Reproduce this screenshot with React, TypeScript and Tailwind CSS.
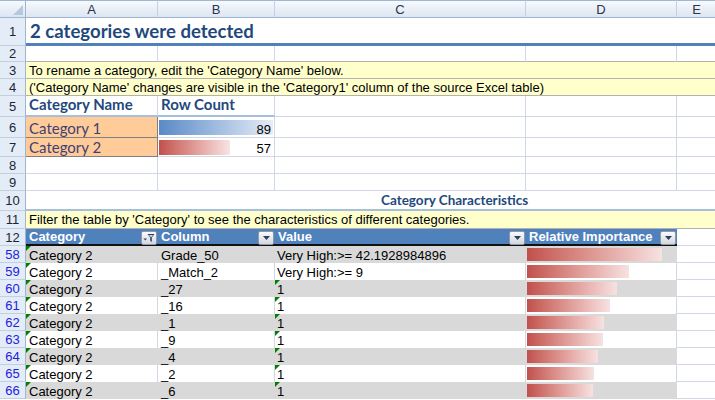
import React from "react"

const letters = [
    { l: "A", w: "w-[132px]" },
    { l: "B", w: "w-[117px]" },
    { l: "C", w: "w-[251px]" },
    { l: "D", w: "w-[151px]" },
    { l: "E", w: "w-[40px]" },
    { l: "", w: "w-[80px]" },
]

const data = [
    { n: 58, col: "Grade_50", val: "Very High:>= 42.1928984896", w: 135, tick: false },
    { n: 59, col: "_Match_2", val: "Very High:>= 9", w: 102, tick: false },
    { n: 60, col: "_27", val: "1", w: 90, tick: true },
    { n: 61, col: "_16", val: "1", w: 83, tick: true },
    { n: 62, col: "_1", val: "1", w: 77, tick: true },
    { n: 63, col: "_9", val: "1", w: 76, tick: true },
    { n: 64, col: "_4", val: "1", w: 71, tick: true },
    { n: 65, col: "_2", val: "1", w: 67, tick: true },
    { n: 66, col: "_6", val: "1", w: 66, tick: true },
]

const calibri = "font-['Lato','Carlito',sans-serif]"

function RowNum({ n, blue }: { n: number; blue?: boolean }) {
    return (
        <div
            className={`w-[26px] shrink-0 h-full flex items-center justify-center bg-[#e4ecf7] border-r border-r-[#9eb6ce] border-b border-b-[#c0cfe2] text-[13px] leading-none ${blue ? "text-[#2222dd]" : "text-[#1c2533]"}`}
        >
            {n}
        </div>
    )
}

function Tick() {
    return (
        <span className="absolute left-0 top-0 w-0 h-0 border-t-[5px] border-t-[#008000] border-r-[5px] border-r-transparent" />
    )
}

function DropBtn({ filter }: { filter?: boolean }) {
    return (
        <span className="absolute right-[1px] top-[2px] w-[16px] h-[14px] rounded-[2px] border border-[#8d98aa] bg-linear-to-b from-[#fbfbfc] to-[#d3d7de] flex items-center justify-center">
            {filter ? (
                <svg width="12" height="10" viewBox="0 0 12 10">
                    <path d="M0.5 5.5h3.5L2.25 7.5z" fill="#2e3f66" />
                    <path d="M4.5 1h7L8.8 4.5v4.5l-1.6-1.2V4.5z" fill="#2e3f66" />
                    <path d="M6 2h4L8.3 4.2H7.7z" fill="#c9d3e6" />
                </svg>
            ) : (
                <svg width="7" height="4" viewBox="0 0 7 4">
                    <path d="M0 0h7L3.5 4z" fill="#2e3f66" />
                </svg>
            )}
        </span>
    )
}

function GridCells({ from, line }: { from: number; line?: string }) {
    return (
        <>
            {letters.slice(from).map((c, i) => (
                <div
                    key={i}
                    className={`${c.w} shrink-0 h-full border-r border-r-[#d0d7e5] border-b ${line ?? "border-b-[#d0d7e5]"}`}
                />
            ))}
        </>
    )
}

function EdgeCells() {
    return (
        <>
            <div className="w-[40px] shrink-0 h-full border-r border-b border-[#d0d7e5]" />
            <div className="w-[80px] shrink-0 h-full border-r border-b border-[#d0d7e5]" />
        </>
    )
}

export default function App() {
    return (
        <div className="w-[715px] h-[400px] overflow-hidden bg-white font-['Liberation_Sans',Arial,sans-serif] text-[13px] text-black">
            {/* column headers */}
            <div className="flex h-[18px]">
                <div className="relative w-[26px] shrink-0 h-full bg-linear-to-b from-[#f6f9fd] to-[#dce6f3] border-r border-b border-t border-[#9eb6ce]">
                    <svg className="absolute right-[2px] bottom-[2px]" width="10" height="10" viewBox="0 0 10 10">
                        <path d="M10 0V10H0z" fill="#b6c8df" />
                    </svg>
                </div>
                {letters.map((c, i) => (
                    <div
                        key={i}
                        className={`${c.w} shrink-0 h-full flex items-center justify-center bg-linear-to-b from-[#f7f9fd] to-[#dde6f2] border-t border-t-[#9eb6ce] border-b border-b-[#9eb6ce] border-r border-r-[#c3d1e4] text-[13px] text-[#27364d] leading-none`}
                    >
                        {c.l}
                    </div>
                ))}
            </div>

            {/* 1 */}
            <div className="flex h-[28px]">
                <RowNum n={1} />
                <div className={`flex-1 flex items-end pl-[4px] pb-[2px] border-b-[3px] border-b-[#4f81bd] ${calibri} font-bold text-[18.6px] text-[#1f497d] leading-none`}>
                    2 categories were detected
                </div>
            </div>

            {/* 2 */}
            <div className="flex h-[16px]">
                <RowNum n={2} />
                <GridCells from={0} line="border-b-[#b2b2b2]" />
            </div>

            {/* 3 */}
            <div className="flex h-[17px]">
                <RowNum n={3} />
                <div className="flex-1 flex items-end pl-[3px] pb-[1px] bg-[#ffffcc] border-b border-b-[#b2b2b2] leading-none">
                    To rename a category, edit the 'Category Name' below.
                </div>
            </div>

            {/* 4 */}
            <div className="flex h-[17px]">
                <RowNum n={4} />
                <div className="flex-1 flex items-end pl-[3px] pb-[1px] bg-[#ffffcc] border-b border-b-[#b2b2b2] leading-none">
                    ('Category Name' changes are visible in the 'Category1' column of the source Excel table)
                </div>
            </div>

            {/* 5 */}
            <div className="flex h-[21px]">
                <RowNum n={5} />
                <div className={`w-[132px] shrink-0 h-full flex items-end pl-[3px] pb-[3px] border-r border-r-[#d0d7e5] border-b-2 border-b-[#a7bfde] ${calibri} font-bold text-[15px] text-[#1f497d] leading-none`}>
                    Category Name
                </div>
                <div className={`w-[117px] shrink-0 h-full flex items-end pl-[3px] pb-[3px] border-r border-r-[#d0d7e5] border-b-2 border-b-[#a7bfde] ${calibri} font-bold text-[15px] text-[#1f497d] leading-none`}>
                    Row Count
                </div>
                <GridCells from={2} />
            </div>

            {/* 6, 7 */}
            {[
                { n: 6, name: "Category 1", count: 89, w: 114, h: "h-[21px]", bar: "from-[#5a8ac6] to-[#e6edf6]" },
                { n: 7, name: "Category 2", count: 57, w: 71, h: "h-[19px]", bar: "from-[#c0504d] to-[#f7e4e4]" },
            ].map((r) => (
                <div key={r.n} className={`flex ${r.h}`}>
                    <RowNum n={r.n} />
                    <div className={`w-[132px] shrink-0 h-full flex items-end pl-[3px] pb-[1px] bg-[#ffcc99] border-r border-b border-[#7f7f7f] ${calibri} text-[15px] text-[#3f3f76] leading-none`}>
                        {r.name}
                    </div>
                    <div className="relative w-[117px] shrink-0 h-full flex items-center pl-px border-r border-b border-[#d0d7e5]">
                        <div className={`h-[15px] bg-linear-to-r ${r.bar}`} style={{ width: r.w }} />
                        <span className="absolute right-[3px] bottom-[1px] leading-none">{r.count}</span>
                    </div>
                    <GridCells from={2} />
                </div>
            ))}

            {/* 8, 9 */}
            {[8, 9].map((n) => (
                <div key={n} className="flex h-[17px]">
                    <RowNum n={n} />
                    <GridCells from={0} />
                </div>
            ))}

            {/* 10 */}
            <div className="flex h-[20px]">
                <RowNum n={10} />
                <div className={`flex-1 flex items-end pl-[355px] pb-[2px] border-b-2 border-b-[#a7bfde] ${calibri} font-bold text-[13.5px] text-[#1f497d] leading-none`}>
                    Category Characteristics
                </div>
            </div>

            {/* 11 */}
            <div className="flex h-[18px]">
                <RowNum n={11} />
                <div className="flex-1 flex items-end pl-[3px] pb-[2px] bg-[#ffffcc] border-b border-b-[#b2b2b2] leading-none">
                    Filter the table by 'Category' to see the characteristics of different categories.
                </div>
            </div>

            {/* 12 table header */}
            <div className="flex h-[17px]">
                <RowNum n={12} />
                {[
                    { t: "Category", w: "w-[132px]", f: true },
                    { t: "Column", w: "w-[117px]", f: false },
                    { t: "Value", w: "w-[251px]", f: false },
                    { t: "Relative Importance", w: "w-[151px]", f: false },
                ].map((h) => (
                    <div
                        key={h.t}
                        className={`relative ${h.w} shrink-0 h-full flex items-end pl-[3px] pb-[1px] bg-[#4f81bd] border-b-2 border-b-[#111] text-white font-bold leading-none`}
                    >
                        {h.t}
                        <DropBtn filter={h.f} />
                    </div>
                ))}
                <EdgeCells />
            </div>

            {/* table rows */}
            {data.map((r, i) => {
                const gray = i % 2 === 0
                const cell = gray
                    ? "bg-[#d9d9d9]"
                    : "bg-white border-r border-r-[#d0d7e5]"
                return (
                    <div key={r.n} className="flex h-[17px]">
                        <RowNum n={r.n} blue />
                        <div className={`relative w-[132px] shrink-0 h-full flex items-end pl-[3px] pb-px leading-none ${cell}`}>
                            <Tick />
                            Category 2
                        </div>
                        <div className={`w-[117px] shrink-0 h-full flex items-end pl-[3px] pb-px leading-none ${cell}`}>
                            {r.col}
                        </div>
                        <div className={`relative w-[251px] shrink-0 h-full flex items-end pl-[2px] pb-px leading-none ${cell}`}>
                            {r.tick && <Tick />}
                            {r.val}
                        </div>
                        <div className={`w-[151px] shrink-0 h-full flex items-center pl-px ${cell}`}>
                            <div className="h-[13px] bg-linear-to-r from-[#c0504d] to-[#f6e2e2]" style={{ width: r.w }} />
                        </div>
                        <EdgeCells />
                    </div>
                )
            })}
        </div>
    )
}
